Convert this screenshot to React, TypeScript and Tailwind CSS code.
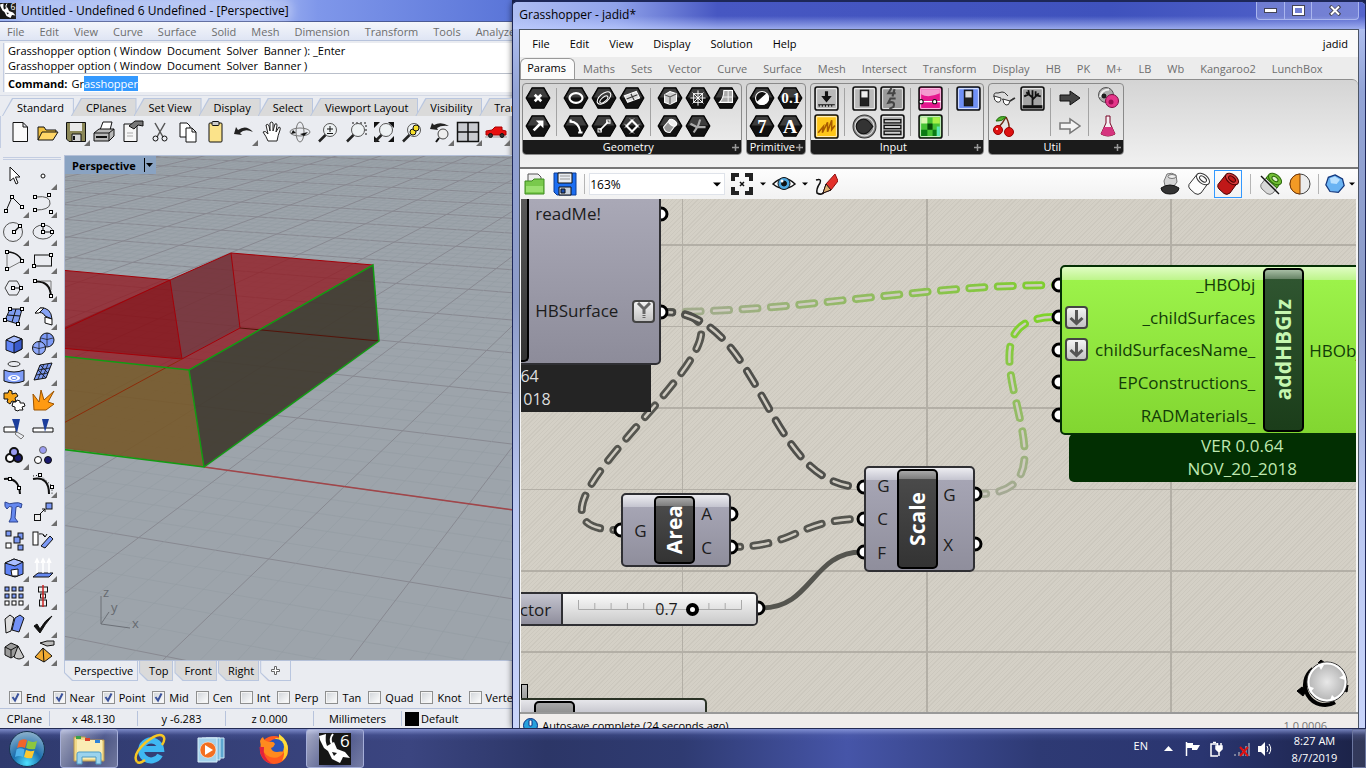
import { useEffect, useRef } from 'react';
import type { ReactNode } from 'react';

// Icon wrapper, all drawings use a 24 unit box
const Ico = ({ size = 24, children }: { size?: number; children: ReactNode }) => (
  <svg width={size} height={size} viewBox="0 0 24 24" fill="none" stroke="#111" strokeWidth="1" className="shrink-0">
    {children}
  </svg>
);

const Dots = ({ pts }: { pts: number[][] }) => (
  <g fill="#fff" stroke="#000">
    {pts.map(([x, y]) => (
      <rect key={`${x}-${y}`} x={x - 1.5} y={y - 1.5} width="3" height="3" />
    ))}
  </g>
);

const Flyout = () => (
  <svg width="6" height="6" viewBox="0 0 6 6" className="absolute right-0 bottom-0">
    <path d="M6 0V6H0Z" fill="#6d6d6d" />
  </svg>
);

const Rhino6 = ({ size }: { size: number }) => (
  <svg width={size} height={size} viewBox="0 0 32 32" className="shrink-0">
    <rect width="32" height="32" fill="#161616" />
    <path d="M0 3L7 1Q6 8 8 13L15 9L18 16L26 19L31 25L24 24L21 30L13 26L9 18L5 15L1 7Z" fill="#fff" />
    <path d="M14 1Q10 6 13 11" stroke="#fff" strokeWidth="2" fill="none" />
    <path d="M13 19l5 1-3 3z" fill="#161616" />
    <text x="21" y="14" fontSize="17" fill="#fff" className="font-['Open_Sans',sans-serif]">6</text>
  </svg>
);

const magnifier = (
  <g>
    <circle cx="14" cy="10" r="6.5" fill="#eef2f4" stroke="#555" />
    <path d="M9.5 15L3 21.5" stroke="#222" strokeWidth="2.5" />
  </g>
);

// Standard toolbar
const standardTools: { name: string; fly?: boolean; icon: ReactNode }[] = [
  { name: 'New', icon: <path d="M5 2.5H15L19.5 7V21.5H5Z M15 2.5V7H19.5" fill="#fafafa" /> },
  { name: 'Open', icon: <g><path d="M2 20V7h6l2 3h10v4" fill="#f0c040" /><path d="M2 20L6 12H22L17 20Z" fill="#ffd667" /></g> },
  { name: 'Save', fly: true, icon: <g><path d="M2.5 2.5H21.5V21.5H5L2.5 19Z" fill="#8b8757" /><path d="M6 3H18V11H6Z" fill="#e9e9e9" stroke="none" /><path d="M8 14H17V21.5H8Z" fill="#d7d7d7" /><path d="M10 16v4" strokeWidth="2" /></g> },
  { name: 'Print', icon: <g><path d="M8 10L11 2H20L18 10" fill="#fff" /><path d="M2 13L7 9H22V16L17 21H2Z" fill="#b9b9b9" /><path d="M2 13H17V21M17 13L22 9" /><path d="M4 17H15" strokeWidth="2" /></g> },
  { name: 'Properties', icon: <g><path d="M4 4H17V21.5H4Z" fill="#f6f6f6" /><path d="M9 6L15 1H23V6L18 5L14 9Z" fill="#777" /><path d="M7 13H13M7 16H13" stroke="#aaa" /></g> },
  { name: 'Cut', icon: <g><path d="M7 3L15 17M17 3L9 17" stroke="#555" strokeWidth="1.5" /><circle cx="7.5" cy="18.5" r="2.5" /><circle cx="16.5" cy="18.5" r="2.5" /></g> },
  { name: 'Copy', icon: <g><path d="M4 3H11L14 6V17H4Z" fill="#fff" /><path d="M10 8H16L20 12V22H10Z" fill="#fff" /><path d="M16 8V12H20" /></g> },
  { name: 'Paste', icon: <g><rect x="5" y="3" width="13" height="19" rx="1" fill="#fbe38a" /><rect x="8" y="1.5" width="7" height="4" rx="1" fill="#ccc" /></g> },
  { name: 'Undo', fly: true, icon: <path d="M2 14L4 7L6 10Q14 4 21 12Q13 8 8 13L10 15Z" fill="#222" stroke="none" /> },
  { name: 'Pan', icon: <path d="M8 21Q6 16 3 12Q5 10 8 14L6 5Q8 3 9 6L10 11V3Q12 1 13 3V11L15 4Q17 3 17 5L16 12L19 7Q21 7 20 10Q18 15 17 21Z" fill="#fff" stroke="#222" /> },
  { name: 'Rotate view', icon: <g stroke="#777"><ellipse cx="12" cy="12" rx="10" ry="4" /><ellipse cx="12" cy="12" rx="4" ry="10" /><path d="M5 10L3 14L8 13ZM12 14L20 12L16 16Z" fill="#111" stroke="none" /></g> },
  { name: 'Zoom', icon: <g>{magnifier}<path d="M11 9H17M14 6V12M11 13.5H17" stroke="#111" /></g> },
  { name: 'Zoom window', icon: <g><path d="M8 3H22V17" strokeDasharray="2 2" />{magnifier}</g> },
  { name: 'Zoom extents', icon: <g><path d="M2 2H8L2 8ZM22 2H16L22 8ZM2 22H8L2 16ZM22 22H16L22 16Z" fill="#111" stroke="none" />{magnifier}</g> },
  { name: 'Zoom selected', icon: <g>{magnifier}<circle cx="13" cy="12" r="3" fill="#f6df2a" /><circle cx="16" cy="8" r="3" fill="#f6df2a" /></g> },
  { name: 'Undo view', fly: true, icon: <g><path d="M2 9L4 3L6 5Q13 1 21 6Q13 5 9 8L10 10Z" fill="#222" stroke="none" /><circle cx="15" cy="14" r="5" fill="#eee" stroke="#444" /><path d="M11 18L8 22" strokeWidth="2" /></g> },
  { name: 'Viewports', fly: true, icon: <g><rect x="1.5" y="2.5" width="21" height="19" fill="#c9cbd0" strokeWidth="1.5" /><path d="M12 2V22M1 12H23" strokeWidth="1.5" /></g> },
  { name: 'Car', fly: true, icon: <g><path d="M1 17H23" stroke="#999" /><path d="M2 15V11L8 10L11 7H18V10L22 11V15Z" fill="#e81010" stroke="#a00" /><circle cx="6.5" cy="15.5" r="2" fill="#333" /><circle cx="18" cy="15.5" r="2" fill="#333" /></g> },
];

// Side toolbar, two per row
const sideTools: { name: string; fly?: boolean; icon: ReactNode }[] = [
  { name: 'Select', icon: <path d="M8 3V17L11.5 14L14 20L16 19L13.5 13H18Z" fill="#fff" /> },
  { name: 'Point', fly: true, icon: <circle cx="12" cy="12" r="2" fill="#fff" /> },
  { name: 'Polyline', fly: true, icon: <g><path d="M4 19L10 5L20 15" /><Dots pts={[[4, 19], [10, 5], [20, 15]]} /></g> },
  { name: 'Curve', fly: true, icon: <g><path d="M5 5Q20 3 19 12Q18 18 5 18" stroke="#555" /><Dots pts={[[4, 5], [18, 3], [4, 18], [20, 20]]} /></g> },
  { name: 'Circle', fly: true, icon: <g><circle cx="11" cy="12" r="9.5" stroke="#555" /><path d="M12 12L18 6" strokeWidth="1.5" /><Dots pts={[[12, 12], [18, 6]]} /></g> },
  { name: 'Ellipse', fly: true, icon: <g><ellipse cx="12" cy="12" rx="10" ry="7" stroke="#555" /><path d="M12 5V12H22" /><Dots pts={[[12, 5], [12, 12], [21, 12]]} /></g> },
  { name: 'Arc', fly: true, icon: <g><path d="M5 4Q16 4 20 13L5 21Z" stroke="#777" /><path d="M5 4Q16 4 20 13" strokeWidth="1.5" /><Dots pts={[[5, 4], [20, 13], [5, 21]]} /></g> },
  { name: 'Rectangle', fly: true, icon: <g><rect x="3.5" y="7" width="17" height="11" /><Dots pts={[[3, 18], [20, 7]]} /></g> },
  { name: 'Polygon', fly: true, icon: <g><path d="M3 12L7 5H15L19 12L15 19H7Z" stroke="#444" /><path d="M11 12H19" /><Dots pts={[[11, 12], [19, 12]]} /></g> },
  { name: 'Fillet', fly: true, icon: <g><path d="M5 5.5Q19 5 20 20" strokeWidth="2" /><path d="M10 5H20V14" stroke="#777" /><Dots pts={[[4, 5], [20, 20]]} /></g> },
  { name: 'Surface', fly: true, icon: <g><path d="M8 5H20L16 20L3 16Z" fill="#7e9cf0" /><path d="M14 5L10 18M5.5 11L18 12" /><Dots pts={[[8, 5], [20, 5], [3, 16], [16, 20]]} /></g> },
  { name: 'Loft', fly: true, icon: <g><path d="M4 9L9 4Q20 3 21 15L14 12Q12 7 4 9Z" fill="#87a3f5" /><path d="M4 9L9 4H13L8 9ZM14 13L21 15V21L14 19Z" fill="#fff" /></g> },
  { name: 'Box', fly: true, icon: <g><path d="M4 8L12 4L20 7V17L12 21L4 18Z" fill="#5f83f5" /><path d="M4 8L12 4L20 7L12 11Z" fill="#a9beff" /><path d="M12 11L20 7V17L12 21Z" fill="#3a5bcb" /></g> },
  { name: 'Sphere', fly: true, icon: <g><circle cx="16" cy="8" r="7" fill="#7d9af5" /><circle cx="8" cy="16" r="6.5" fill="#8ea8fa" /><path d="M10 6Q16 9 22 6M16 1V14M2 15Q8 18 14 15M8 10V22" strokeWidth=".7" /></g> },
  { name: 'Revolve', fly: true, icon: <g><ellipse cx="12" cy="4" rx="6" ry="2.5" stroke="#333" /><path d="M2 10Q12 14 22 10V21Q12 25 2 21Z" fill="#7f9df8" /><ellipse cx="12" cy="18" rx="6" ry="3" fill="#fff" stroke="none" /><ellipse cx="12" cy="18" rx="3" ry="1.5" stroke="#6488f1" /></g> },
  { name: 'Mesh', fly: true, icon: <g><path d="M9 5L21 3L15 18L3 20Z" fill="#7c99f0" /><path d="M13 4L7 19M17 4L11 19M7 10L19 8M5 15L17 13M9 5L17 13M7 10L15 18" strokeWidth=".8" /></g> },
  { name: 'Explode', icon: <g><path d="M2 5h4l1-3 3 1v3l4-1 2 3-3 2 1 4-4-1-2 3-3-2 1-3-4 0z" fill="#f5a316" /><path d="M11 14h3l1-2 3 1v2l4 0 1 3-3 1 1 3-4 0-1 1-3-1 0-3-3-1z" fill="#fff" /></g> },
  { name: 'Burst', icon: <path d="M3 22L2 6L8 14L10 2L13 12L23 3L17 14L23 16L15 22Z" fill="#ff9a12" stroke="#9a5200" /> },
  { name: 'Trim', icon: <g><path d="M2 11H14V16H2Z" fill="#fff" /><path d="M10 3H18L15 17Z" fill="#1c3e9c" stroke="none" /><path d="M15 16L22 20L19 23L13 18Z" stroke="#777" /></g> },
  { name: 'Split', icon: <g><path d="M2 12H22V16H2Z" fill="#fff" /><path d="M11 3H18L14 16Z" fill="#1c3e9c" stroke="none" /></g> },
  { name: 'Group', fly: true, icon: <g strokeWidth="2"><circle cx="8" cy="14" r="4" fill="#fff" /><circle cx="16" cy="14" r="4" fill="#1a1a70" /><circle cx="12" cy="8" r="4" fill="#9a9cf2" /></g> },
  { name: 'Ungroup', icon: <g><circle cx="12" cy="6" r="3.5" fill="#9a9cf2" stroke="#666" /><circle cx="7" cy="16" r="3.5" fill="#fff" /><circle cx="17" cy="16" r="3.5" fill="#1a1a70" /></g> },
  { name: 'Edit points', icon: <g><path d="M2 7Q17 5 18 22" strokeWidth="2" /><Dots pts={[[8, 7], [17, 16]]} /></g> },
  { name: 'Control points', fly: true, icon: <g><path d="M2 7Q18 4 18 22" strokeWidth="2" /><path d="M2 4L9 3L21 14V22" strokeDasharray="1 2" /><Dots pts={[[9, 3], [21, 15]]} /></g> },
  { name: 'Text', icon: <path d="M3 2Q8 5 12 3Q17 2 20 4L19 8Q16 5 14 7L13 18L16 22H7L9 18L10 7Q7 5 5 9Q2 7 3 2Z" fill="#6488f0" stroke="#2c438f" /> },
  { name: 'Move', fly: true, icon: <g><rect x="3.5" y="14.5" width="6" height="6" fill="#eee" /><rect x="15" y="3" width="6" height="6" fill="#7b99f5" /><path d="M9 14L14 9M11 9H14V12" /></g> },
  { name: 'Copy objects', icon: <g><g fill="#7b99f5"><rect x="4" y="3" width="5" height="5" /><rect x="16" y="5" width="5" height="6" /><rect x="12" y="9" width="6" height="6" /><rect x="16" y="17" width="5" height="5" /></g><rect x="4" y="15" width="5" height="5" fill="#fff" /></g> },
  { name: 'Rotate', icon: <g><rect x="2" y="4" width="5" height="13" fill="#fff" /><path d="M10 18L19 8L22 11L14 20Z" fill="#7b99f5" /><path d="M8 6Q13 5 14 9M12 7L14 9L16 6" /></g> },
  { name: 'Cage', fly: true, icon: <g><path d="M3 7L12 3L21 6V18L13 21L3 18Z" fill="#5f83f5" /><path d="M3 7L12 3L21 6L13 10Z" fill="#a9beff" /><path d="M9 14L16 13V20L10 20Z" fill="#fff" /></g> },
  { name: 'Project', fly: true, icon: <g><path d="M2 21H18L22 17H7Z" fill="#6488f0" /><path d="M6 17V4M12 17V4M18 17V4M4 7L6 3L8 7M10 7L12 3L14 7M16 7L18 3L20 7" stroke="#fff" strokeWidth="1.5" /></g> },
  { name: 'Array', fly: true, icon: <g>{[3, 10, 17].map((x) => [3, 10, 17].map((y) => <rect key={`${x}${y}`} x={x} y={y} width="4" height="4" fill={y === 17 ? '#fff' : '#7b99f5'} />))}</g> },
  { name: 'Align', fly: true, icon: <g><rect x="7.5" y="3" width="9" height="5" fill="#eee" /><rect x="9.5" y="10" width="5" height="4" fill="#eee" /><rect x="8.5" y="16" width="7" height="6" fill="#eee" /><path d="M12 1V23" stroke="#c22" strokeWidth="1.5" /></g> },
  { name: 'Bend', fly: true, icon: <g><path d="M3 7L8 3L12 6L9 19L4 21Z" fill="#ddd" /><path d="M13 6L18 3L22 6L17 20L10 18Z" fill="#7391f5" /></g> },
  { name: 'Check', fly: true, icon: <path d="M3 14L6 12L9 17Q14 8 21 4Q14 12 9 21Z" fill="#111" /> },
  { name: 'Solid', fly: true, icon: <g><path d="M3 7L9 3L16 6V14L9 18L3 15Z" fill="#9a9a9a" /><path d="M3 7L9 10L16 6M9 10V18" /><path d="M16 6L22 17Q17 21 12 17Z" fill="#c6c6c6" /></g> },
  { name: 'Pyramid', fly: true, icon: <g><path d="M12 8L21 16L13 22L4 17Z" fill="#f2ab32" /><path d="M12 8L13 22" /><path d="M9 3L16 1H23V5L16 6Z" fill="#bbb" /></g> },
];

const SlantTab = ({ label, active }: { label: string; active?: boolean }) => (
  <button className="-mr-[3px] h-[18px] bg-[#b9c6df] p-px pb-0 [clip-path:polygon(10px_0,100%_0,100%_100%,0_100%)]">
    <span className={`flex h-full items-center pr-[9px] pl-[14px] whitespace-nowrap [clip-path:polygon(10px_0,100%_0,100%_100%,0_100%)] ${active ? 'bg-[#eaecf1]' : 'bg-[#dadada]'}`}>
      {label}
    </span>
  </button>
);

const ViewTab = ({ label, active }: { label: ReactNode; active?: boolean }) => (
  <button className="h-[20px] bg-[#b9c6df] p-px pt-0 [clip-path:polygon(0_0,100%_0,100%_100%,8px_100%,0_60%)]">
    <span className={`flex h-full items-center pr-1 pl-[9px] [clip-path:polygon(0_0,100%_0,100%_100%,8px_100%,0_60%)] ${active ? 'bg-[#eaecf1]' : 'bg-[#dadada]'}`}>
      {label}
    </span>
  </button>
);

// Perspective ground grid: two families of lines meeting on the horizon
const GroundGrid = () => {
  const lines: ReactNode[] = [];
  for (let k = -10; k <= 75; k++) {
    const y = 1 / (0.001961 + k * 0.0000582);
    const major = k % 5 === 0;
    const slope = y / 3652;
    lines.push(<line key={`a${k}`} x1="0" y1={y - 512 * slope} x2="760" y2={y + 248 * slope} stroke={major ? '#888991' : '#949ca3'} strokeWidth={major ? 1 : 0.6} />);
  }
  for (let j = -80; j <= 14; j++) {
    const x = 163 + j * 37.4;
    const major = j % 5 === 0;
    lines.push(<line key={`b${j}`} x1={x} y1="660" x2={x + (853 - x) * 0.8} y2="132" stroke={major ? '#888991' : '#949ca3'} strokeWidth={major ? 1 : 0.6} />);
  }
  return <g>{lines}</g>;
};

const Viewport = () => (
  <div className="relative min-h-0 flex-1 overflow-hidden border-t border-l border-[#b4c0d8] bg-[#9da4ab]">
    <svg className="block h-full w-full">
      <g transform="translate(-65 -156)">
        <GroundGrid />
        <path d="M204 467L700 536" stroke="#a14549" strokeWidth="1.5" />
        <path d="M60 270L170 280L231 253L373 265L189 370L60 356Z" fill="#92141c" fillOpacity=".75" />
        <path d="M60 329L170 280L182 359L60 348Z" fill="#7d0a10" fillOpacity=".5" />
        <path d="M170 280L231 253L240 327L182 359Z" fill="#5a4148" fillOpacity=".45" />
        <path d="M60 356L189 370L204 467L60 448Z" fill="#755627" fillOpacity=".88" />
        <path d="M189 370L373 265L379 341L204 467Z" fill="#40392f" fillOpacity=".92" />
        <path d="M60 270L170 280L231 253L373 265M60 331L170 280L182 359L60 348M231 253L240 328L182 359" stroke="#a40008" fill="none" />
        <path d="M240 328L379 341" stroke="#541309" />
        <path d="M182 359L60 425" stroke="#8c2c0a" />
        <path d="M60 356L189 370L373 265L379 341L204 467L60 449M189 370L204 467" stroke="#129b12" strokeWidth="1.5" fill="none" />
        <path d="M101 596V624L130 628M101 624L109 612" stroke="#6c7077" fill="none" />
        <g fontSize="13" fill="#666a70" className="font-['Open_Sans',sans-serif]">
          <text x="103" y="597">z</text>
          <text x="111" y="612">y</text>
          <text x="132" y="628">x</text>
        </g>
      </g>
    </svg>
    <button className="absolute top-0 left-0 flex h-[18px] items-center bg-[#8aa3c2] pl-[7px] font-bold text-black">
      Perspective
      <span className="ml-2 h-3.5 w-px bg-black" />
      <svg width="9" height="6" viewBox="0 0 9 6" className="mr-0.5"><path d="M1 1h7L4.5 5z" /></svg>
    </button>
  </div>
);

const osnaps = [
  ['End', true], ['Near', true], ['Point', true], ['Mid', true], ['Cen', false], ['Int', false],
  ['Perp', false], ['Tan', false], ['Quad', false], ['Knot', false], ['Vertex', false],
] as const;

const RhinoWindow = () => {
  const command = useRef<HTMLInputElement>(null);

  // Autocompleted part of the command stays selected
  useEffect(() => {
    command.current?.focus();
    command.current?.setSelectionRange(2, 11);
  }, []);

  return (
    <section className="flex w-3/8 min-w-0 shrink-0 flex-col overflow-hidden bg-[#eaecf1]">
      <header className="flex h-[22px] shrink-0 items-center gap-[5px] border-b border-[#4b5a94] bg-[linear-gradient(90deg,#9db3f0_0%,#a9bbf3_50%,#7f97ea_62%,#5a75d8_100%)]">
        <Rhino6 size={16} />
        <h1 className="rounded bg-white/20 text-[12px] whitespace-nowrap shadow-[0_0_8px_4px_rgba(255,255,255,0.25)]">Untitled - Undefined 6 Undefined - [Perspective]</h1>
      </header>
      <nav className="flex h-[19px] shrink-0 items-center gap-[15px] border-b border-[#b7c3dc] bg-[linear-gradient(#f4f6fb,#dfe5f4)] pl-[7px] text-[#6d6d6d]">
        {['File', 'Edit', 'View', 'Curve', 'Surface', 'Solid', 'Mesh', 'Dimension', 'Transform', 'Tools', 'Analyze'].map((m) => (
          <button key={m}>{m}</button>
        ))}
      </nav>
      <div className="mt-0.5 ml-[3px] shrink-0 border-l border-[#c3cde2] pl-px">
        <div className="h-[30px] bg-white pl-[3px] leading-[15px]">
          <p className="whitespace-pre">Grasshopper option ( Window  Document  Solver  Banner ): _Enter</p>
          <p className="whitespace-pre">Grasshopper option ( Window  Document  Solver  Banner )</p>
        </div>
        <div className="flex h-[19px] items-center border-t border-[#b9bfca] bg-white pl-[3px]">
          <label htmlFor="command" className="font-bold">Command:</label>
          <input id="command" ref={command} defaultValue="Grasshopper" className="ml-1 min-w-0 flex-1 outline-none selection:bg-[#3399ff] selection:text-white" />
        </div>
      </div>
      <div className="mt-[3px] flex h-[21px] shrink-0 items-end border-t border-[#d4d9e5] pl-[2px]">
        {['Standard', 'CPlanes', 'Set View', 'Display', 'Select', 'Viewport Layout', 'Visibility', 'Transform'].map((t, i) => (
          <SlantTab key={t} label={t} active={i === 0} />
        ))}
      </div>
      <div className="flex h-[32px] shrink-0 items-center border-l border-[#c3cde2] pl-[5px]">
        {standardTools.map((t) => (
          <button key={t.name} aria-label={t.name} className="relative flex h-[28px] w-[28px] shrink-0 items-center justify-center">
            <Ico size={24}>{t.icon}</Ico>
            {t.fly && <Flyout />}
          </button>
        ))}
      </div>
      <div className="flex min-h-0 flex-1 pt-[7px]">
        <div className="flex w-[64px] shrink-0 flex-col">
          <div className="mx-[3px] my-[2px] h-[3px] border-y border-[#c3cde2]" />
          <div className="grid w-[57px] grid-cols-2">
            {sideTools.map((t) => (
              <button key={t.name} aria-label={t.name} className="relative flex h-[28px] items-center justify-center">
                <Ico size={24}>{t.icon}</Ico>
                {t.fly && <Flyout />}
              </button>
            ))}
          </div>
        </div>
        <div className="flex min-w-0 flex-1 flex-col">
          <Viewport />
          <div className="flex h-[27px] shrink-0 items-start gap-px border-t border-[#b4c0d8]">
            <ViewTab label="Perspective" active />
            <ViewTab label="Top" />
            <ViewTab label="Front" />
            <ViewTab label="Right" />
            <ViewTab
              active
              label={<svg width="12" height="12" viewBox="0 0 12 12" fill="#fff" stroke="#666" className="mr-1"><path d="M4.5 1.5h2v3h3v2h-3v3h-2v-3h-3v-2h3z" /></svg>}
            />
          </div>
        </div>
      </div>
      <div className="flex h-[22px] shrink-0 items-center gap-[7px] overflow-hidden border-b border-[#b7c3dc] pl-[9px]">
        {osnaps.map(([name, on]) => (
          <label key={name} className="flex shrink-0 items-center gap-[4px]">
            <span className="relative h-[13px] w-[13px] shrink-0">
              <input
                type="checkbox"
                defaultChecked={on}
                className="peer block h-full w-full appearance-none border border-[#8e8f8f] bg-[linear-gradient(135deg,#cfd3d8,#fff)] shadow-[inset_0_0_0_1px_#f4f4f4]"
              />
              <svg viewBox="0 0 13 13" fill="none" stroke="#3a529c" strokeWidth="2" className="pointer-events-none absolute inset-0 hidden peer-checked:block">
                <path d="M3.5 6L6 9.5L9.5 2.5" />
              </svg>
            </span>
            {name}
          </label>
        ))}
      </div>
      <footer className="flex h-[19px] shrink-0 items-center text-center">
        <span className="w-[50px] border-r border-[#b7c3dc]">CPlane</span>
        <span className="w-[88px] border-r border-[#b7c3dc]">x 48.130</span>
        <span className="w-[88px] border-r border-[#b7c3dc]">y -6.283</span>
        <span className="w-[88px] border-r border-[#b7c3dc]">z 0.000</span>
        <span className="w-[88px] border-r border-[#b7c3dc]">Millimeters</span>
        <span className="ml-[3px] h-3.5 w-3.5 bg-black" />
        <span className="ml-0.5">Default</span>
      </footer>
    </section>
  );
};

// Black hexagon used by the Grasshopper params
const Hex = ({ children }: { children: ReactNode }) => (
  <Ico size={26}>
    <path d="M1 12L6.5 2.5H17.5L23 12L17.5 21.5H6.5Z" fill="#111" stroke="#000" />
    <path d="M2.5 11.5L7 3.5H17L21.5 11.5Z" fill="#3d3d3d" stroke="none" />
    <g stroke="#fff">{children}</g>
  </Ico>
);

const Tile = ({ children, fill = '#b9b9b9' }: { children: ReactNode; fill?: string }) => (
  <Ico size={25}>
    <rect x="1" y="1" width="22" height="22" rx="2" fill={fill} stroke="#111" strokeWidth="1.5" />
    <rect x="2.5" y="2.5" width="19" height="19" rx="1" stroke="#fff" strokeOpacity=".7" />
    {children}
  </Ico>
);

const glyph = "font-['Liberation_Serif',serif] font-bold";

type Column = [ReactNode, ReactNode?];

const geometry: Column[][] = [
  [[<Hex><path d="M9 9L15 15M15 9L9 15" strokeWidth="2.5" /></Hex>, <Hex><path d="M8 16L14 10" strokeWidth="2.5" /><path d="M10 7H17V14Z" fill="#fff" stroke="none" /></Hex>]],
  [
    [<Hex><ellipse cx="12" cy="12" rx="6" ry="4.5" strokeWidth="2" /></Hex>, <Hex><path d="M7 8Q14 8 16 17M7 6V9M14 18H18" strokeWidth="2" /></Hex>],
    [<Hex><ellipse cx="12" cy="12" rx="7.5" ry="4" transform="rotate(-40 12 12)" /><ellipse cx="11" cy="13" rx="4.5" ry="2" transform="rotate(-40 12 12)" /></Hex>, <Hex><path d="M8 16L16 8" strokeWidth="1.5" /><path d="M6.5 14.5h3v3h-3zM14.5 6.5h3v3h-3z" /></Hex>],
    [<Hex><path d="M5 10L16 6L19 12L8 16Z" fill="#ddd" /><path d="M11 8L14 14M7 13L17 9" stroke="#333" /></Hex>, <Hex><path d="M7 12L12 7L17 12L12 17Z" strokeWidth="2" /><path d="M5 10L14 19M10 5L19 14M10 19L19 10M5 14L14 5" strokeWidth=".6" /></Hex>],
  ],
  [
    [<Hex><path d="M7 9L12 6L18 8V15L12 18L7 16Z" fill="#ccc" /><path d="M7 9L12 11L18 8M12 11V18" stroke="#555" /></Hex>, <Hex><path d="M6 13L12 6L18 10L12 18Q7 18 6 13Z" fill="#999" /><ellipse cx="14.5" cy="9" rx="4" ry="2.5" transform="rotate(35 14.5 9)" fill="#eee" /></Hex>],
    [<Hex><path d="M12 5V19M5 12H19M7 7L17 17M17 7L7 17M8 8H16V16H8Z" strokeWidth=".9" /></Hex>, <Hex><path d="M5 10L11 13H19M14 6L12 12L8 18" strokeWidth="2" stroke="#aaa" /></Hex>],
    [<Hex><path d="M6 16Q10 12 10 5H18V16Z" fill="#aaa" /><path d="M14 5V16M9 11H18" stroke="#eee" /></Hex>],
  ],
];

const primitive: Column[][] = [
  [
    [<Hex><circle cx="12" cy="12" r="6" fill="#111" /><path d="M7.5 16A6 6 0 0 0 16.5 8Z" fill="#fff" /></Hex>, <Hex><text x="7.5" y="18" fontSize="17" fill="#fff" stroke="none" className={glyph}>7</text></Hex>],
    [<Hex><text x="4" y="17" fontSize="14" fill="#fff" stroke="none" className={glyph}>0.1</text></Hex>, <Hex><text x="5.5" y="18" fontSize="18" fill="#fff" stroke="none" className={glyph}>A</text></Hex>],
  ],
];

const input: Column[][] = [
  [[<Tile><path d="M12 5V11" strokeWidth="3" /><path d="M8 10H16L12 15Z" fill="#111" /><path d="M4 18H20M5 20V18M8 20V18M11 20V18M14 20V18M17 20V18" /></Tile>, <Tile fill="#fec619"><path d="M4 18L9 12L8 18L13 8L13 17L17 6L17 15L20 11" stroke="#a85b00" strokeWidth="1.5" /></Tile>]],
  [
    [<Tile><rect x="8" y="4" width="8" height="15" fill="#222" /><rect x="9" y="5" width="6" height="6" fill="#eee" stroke="none" /></Tile>, <Ico size={25}><circle cx="12" cy="12" r="11" fill="#8a8a8a" stroke="#333" /><circle cx="12" cy="12" r="9" stroke="#ddd" /><path d="M20 12L16 17A7 7 0 1 1 16 7Z" fill="#333" /></Ico>],
    [<Tile fill="#9a9a9a"><path d="M11 2L8 7H15M14 3L12 10M15 12H10L8 16Q15 14 13 20L9 22" stroke="#444" strokeWidth="2" /></Tile>, <Tile fill="#aaa"><path d="M4 5.5H20V8.5H4ZM4 11H20V14H4ZM4 16.5H20V19.5H4Z" fill="#ccc" strokeWidth="1.2" /></Tile>],
  ],
  [[<Tile fill="#e6178f"><path d="M3 3H21V7Q10 12 3 8Z" fill="#f49ad0" stroke="none" /><path d="M2 15H22" stroke="#fff" /><circle cx="3" cy="15" r="2" fill="#fff" /><circle cx="16" cy="15" r="2" fill="#fff" /></Tile>, <Tile fill="#46c234"><g stroke="none"><path d="M3 3h6v6H3z" fill="#d9f7b0" /><path d="M9 9h5v6H9z" fill="#094d08" /><path d="M14 3h7v6h-7z" fill="#a9f048" /><path d="M3 15h6v6H3zM14 15h4v6h-4z" fill="#0b7a14" /><path d="M18 12h3v9h-3z" fill="#5be6b4" /></g></Tile>]],
  [[<Tile fill="#6f90f6"><rect x="8" y="4" width="8" height="15" fill="#222" /><rect x="9" y="5" width="6" height="6" fill="#ddd" stroke="none" /></Tile>]],
];

const util: Column[][] = [
  [
    [<Ico><path d="M2 11Q1 6 6 7L10 6M22 12L18 15M10 13L12 14M14 8L16 10M10 6Q13 6 14 8" stroke="#333" /><path d="M2 10L9 12Q9 17 5 16Q2 15 2 10ZM11 13L18 15Q17 20 14 19Q11 18 11 13Z" fill="#fff" stroke="#333" /><path d="M18 15L23 12" stroke="#333" strokeWidth="1.5" /></Ico>, <Ico><path d="M14 3Q11 9 6 14M14 3Q18 10 17 17" stroke="#6d2a12" strokeWidth="1.5" /><path d="M4 7Q7 1 14 3Q10 8 4 7Z" fill="#4fb42b" stroke="#246b10" /><circle cx="6" cy="16" r="4.5" fill="#dd1111" stroke="#900" /><circle cx="17" cy="18" r="4.5" fill="#dd1111" stroke="#900" /><circle cx="5" cy="15" r="1" fill="#fff" stroke="none" /></Ico>],
    [<Tile fill="#a4a4a4"><path d="M3 19H21V21H3Z" fill="#111" /><path d="M12 19V11L6 6M12 13L18 7M12 11V4M8 8L4 10M16 9L20 10M9 9L8 4M15 10L15 5" strokeWidth="1.7" /></Tile>],
  ],
  [[<Ico><path d="M2 9H12V5L22 12L12 19V15H2Z" fill="#444" stroke="#111" /></Ico>, <Ico><path d="M2 9H12V5L22 12L12 19V15H2Z" fill="#f4f4f4" stroke="#777" strokeWidth="1.5" /></Ico>]],
  [[<Ico><circle cx="10" cy="9" r="7.5" fill="#ababab" stroke="#555" /><path d="M4 11Q5 4 13 3.5" stroke="#eee" strokeWidth="2" /><circle cx="8" cy="10" r="2" fill="#222" /><circle cx="16" cy="15" r="6.5" fill="#e5358a" stroke="#7a0d42" /><circle cx="15" cy="16" r="2.5" fill="#9b0d52" stroke="none" /></Ico>, <Ico><path d="M10 2H14V9L19 20Q12 24 5 20L10 9Z" fill="#f5eef2" stroke="#702" /><path d="M8 13H16L19 20Q12 24 5 20Z" fill="#d6347e" stroke="none" /></Ico>]],
];

const RibbonGroup = ({ title, blocks }: { title: string; blocks: Column[][] }) => (
  <div className="flex shrink-0 flex-col overflow-hidden rounded-[4px] border border-[#8a8a8a] bg-[linear-gradient(#d6d6d6,#efefef)]">
    <div className="flex gap-[10px] px-px">
      {blocks.map((columns, b) => (
        <div key={b} className="relative flex">
          {b > 0 && <span className="absolute top-1 bottom-1 left-[-6px] w-px bg-[#a3a3a3]" />}
          {columns.map((column, c) => (
            <div key={c}>
              {column.map((icon, r) => (
                <button key={r} aria-label={`${title} ${b + 1}.${c + 1}.${r + 1}`} className="flex h-[28px] w-[28px] items-center justify-center">
                  {icon}
                </button>
              ))}
            </div>
          ))}
        </div>
      ))}
    </div>
    <div className="mt-auto flex h-[14px] items-center bg-[#1b1b1b] pr-[2px] pl-px leading-[14px] text-white">
      <span className="flex-1 text-center">{title}</span>
      <svg width="7" height="7" viewBox="0 0 7 7"><path d="M3.5 0V7M0 3.5H7" stroke="#999" strokeWidth="1.5" /></svg>
    </div>
  </div>
);

const Caret = () => (
  <svg width="6" height="4" viewBox="0 0 6 4" className="shrink-0"><path d="M0 .5H6L3 3.5Z" /></svg>
);

// Tilted cylinder, open end to the upper right
const Can = ({ fill, top, dark }: { fill: string; top: string; dark: string }) => (
  <Ico>
    <path d="M9.5 3L2 12.5Q1 15 3 17L8 21.5Q11 23.5 14 21L22 10Z" fill={fill} stroke={dark} />
    <ellipse cx="16" cy="7" rx="7.5" ry="4.5" transform="rotate(38 16 7)" fill={top} stroke={dark} />
    <ellipse cx="16" cy="7" rx="4" ry="2.2" transform="rotate(38 16 7)" fill={fill} stroke={dark} />
  </Ico>
);

const CanvasToolbar = () => (
  <div className="flex h-[32px] shrink-0 items-center border-t-2 border-[#777] bg-[linear-gradient(#fdfdfd,#f2f2f2)] px-[3px]">
    <button aria-label="Open document" className="w-[30px]"><Ico><path d="M5 10V2H15L18 5V10" fill="#eee" stroke="#555" /><path d="M2 9H9L11 7H21V22H2Z" fill="#79c94c" stroke="#3d8a1d" /><path d="M3 20H20V14H3Z" fill="#9be070" stroke="none" /></Ico></button>
    <button aria-label="Save document" className="w-[31px]"><Ico><path d="M1 1H23V23H4L1 20Z" fill="#1c6ef2" stroke="#0c3c96" /><path d="M5 1H19V11H5Z" fill="#e8ecf2" /><path d="M7 4H17M7 7H17" stroke="#999" /><path d="M6 15H18V23H6Z" fill="#c9d2de" /><path d="M8 17H12V21H8Z" fill="#1c4fb0" /></Ico></button>
    <span className="mr-[4px] h-[20px] w-px bg-[#b5b5b5]" />
    <div className="relative h-[22px] w-[136px]">
      <select aria-label="Zoom level" defaultValue="163%" className="h-full w-full appearance-none border border-[#dfe3ea] bg-white text-[12px]">
        <option>163%</option>
        <option>100%</option>
      </select>
      <svg width="8" height="5" viewBox="0 0 8 5" className="pointer-events-none absolute top-[9px] right-[4px]"><path d="M0 .5H8L4 4.5Z" /></svg>
    </div>
    <button aria-label="Zoom extents" className="ml-[5px] flex items-center gap-[6px]">
      <Ico><path d="M3 9V3H9M15 3H21V9M21 15V21H15M9 21H3V15" stroke="#222" strokeWidth="4" /><path d="M10 10L14 14M14 10L10 14" strokeWidth="1.5" /></Ico>
      <Caret />
    </button>
    <button aria-label="Preview" className="ml-[6px] flex items-center gap-[6px]">
      <Ico><path d="M1 12Q12 1 23 12Q12 21 1 12Z" fill="#fff" strokeWidth="1.5" /><circle cx="12" cy="11.5" r="6" fill="#4da7e0" /><circle cx="12" cy="11.5" r="2.5" fill="#111" /><circle cx="10" cy="9" r="1.5" fill="#fff" stroke="none" /></Ico>
      <Caret />
    </button>
    <button aria-label="Sketch" className="ml-[6px]"><Ico><path d="M2 8Q8 6 6 11Q2 17 3 21Q8 24 11 19" strokeWidth="1.5" /><path d="M9 21L12 12L21 2L24 9L17 18Z" fill="#e3302a" stroke="#8c1010" /><path d="M9 21L12 12L17 18Z" fill="#e2b071" /></Ico></button>
    <div className="ml-auto flex items-center">
      <button aria-label="No preview" className="w-[29px]"><Ico><path d="M6 9L9 2Q14 0 18 3L19 10L16 14H7Z" fill="#d5d5d5" stroke="#777" /><ellipse cx="14" cy="4.5" rx="4" ry="2" fill="#eee" stroke="#777" /><path d="M3 16Q12 10 21 16Q20 22 12 22Q4 22 3 16Z" fill="#333" /></Ico></button>
      <button aria-label="Wireframe preview" className="w-[27px]"><Can fill="#fdfdfd" top="#fff" dark="#333" /></button>
      <button aria-label="Shaded preview" className="flex h-[28px] w-[28px] items-center justify-center border border-[#3399ff]"><Can fill="#c01818" top="#d53a3a" dark="#4c0404" /></button>
      <span className="mx-[8px] h-[20px] w-px bg-[#b5b5b5]" />
      <button aria-label="Selected only" className="w-[29px]"><Ico><path d="M7 6L2 12.5Q1 15 3 17L8 21.5Q11 23.5 14 21L18 16Z" fill="#d9d9d9" stroke="#777" /><path d="M9.5 3L7 6L18 16L22 10Z" fill="#5fae26" stroke="#2e6a0c" /><ellipse cx="16" cy="7" rx="7.5" ry="4.5" transform="rotate(38 16 7)" fill="#72bf35" stroke="#2e6a0c" /><ellipse cx="16" cy="7" rx="3.5" ry="2" transform="rotate(38 16 7)" fill="#dff3cd" stroke="#2e6a0c" /><path d="M2 4L20 22" strokeWidth="1.5" /></Ico></button>
      <button aria-label="Document preview" className="w-[26px]"><Ico><circle cx="12" cy="12" r="10" fill="#ececec" stroke="#444" /><path d="M12 2A10 10 0 0 0 12 22Z" fill="#f39a25" stroke="#7c3b05" /></Ico></button>
      <span className="mr-[6px] ml-[4px] h-[20px] w-px bg-[#b5b5b5]" />
      <button aria-label="Mesh quality" className="flex items-center gap-[4px]">
        <Ico size={20}><path d="M12 1L21 6L23 14L16 22L6 21L1 13L4 4Z" fill="#69b3f3" stroke="#14377c" strokeWidth="1.5" /><path d="M12 3L18 7L14 12L7 11L6 5Z" fill="#b9e0ff" stroke="none" /></Ico>
        <Caret />
      </button>
    </div>
  </div>
);

const Wire = ({ d, color, offset = 0 }: { d: string; color: string; offset?: number }) => (
  <g fill="none" strokeLinecap="round" strokeDasharray="15 13.5" strokeDashoffset={offset}>
    <path d={d} stroke={color} strokeWidth="8" />
    <path d={d} stroke="#d0ccc2" strokeWidth="2.5" />
  </g>
);

const ports = [
  [661, 214], [661, 312],
  [1059, 285], [1059, 317], [1059, 350], [1059, 382], [1059, 415],
  [621, 530], [731, 514], [731, 547],
  [864, 487], [864, 519], [864, 552], [975, 494], [975, 544],
  [758, 608],
];

const Wires = () => (
  <svg className="absolute inset-0 h-full w-full">
    <defs>
      <linearGradient id="wireTop" gradientUnits="userSpaceOnUse" x1="664" y1="0" x2="1058" y2="0">
        <stop offset="0" stopColor="#a4ac90" /><stop offset=".15" stopColor="#a0ad88" /><stop offset="1" stopColor="#7ecf2c" />
      </linearGradient>
      <linearGradient id="wireChild" gradientUnits="userSpaceOnUse" x1="0" y1="494" x2="0" y2="317">
        <stop offset="0" stopColor="#a5a995" /><stop offset="1" stopColor="#7fd22b" />
      </linearGradient>
      <radialGradient id="ball"><stop offset="0" stopColor="#e8e8e8" /><stop offset="1" stopColor="#b2b2b2" /></radialGradient>
    </defs>
    <g transform="translate(-521 -199)">
      <path d="M682.5 199V720M521 326.5H1400M521 489.5H1400" stroke="#b3afa6" />
      <path d="M927 199V720M1171 199V720M521 245H1400M521 408H1400M521 571H1400M521 652H1400" stroke="#b3afa6" strokeWidth="2" />
      <Wire d="M664 312C800 312 920 285 1058 285" color="url(#wireTop)" offset={7} />
      <Wire d="M664 312C809 312 474 530 619 530" color="#55554f" offset={7} />
      <Wire d="M664 312C764 312 764 487 862 487" color="#4f4f4b" offset={7} />
      <Wire d="M732 547C797 547 797 519 862 519" color="#55554f" offset={7} />
      <Wire d="M978 494C1096 494 938 317 1056 317" color="url(#wireChild)" offset={7} />
      <path d="M762 608C812 608 812 552 862 552" stroke="#55554f" strokeWidth="5" fill="none" />
      {ports.map(([x, y]) => (
        <circle key={`${x}-${y}`} cx={x} cy={y} r="6" fill="#fff" stroke="#000" strokeWidth="3" />
      ))}
      <circle cx="1325" cy="685" r="20" fill="none" stroke="#000" strokeWidth="4" strokeDasharray="60 10 10 46" transform="rotate(60 1325 685)" />
      <path d="M1297 691L1302 687L1307 690L1303 696ZM1318 663L1321 660L1325 663ZM1343 690L1348 685L1347 692Z" fill="#000" stroke="#000" />
      <circle cx="1327" cy="682" r="20" fill="url(#ball)" stroke="#333" />
      <circle cx="1327" cy="682" r="18.5" fill="none" stroke="#fff" strokeWidth="2" />
      <path d="M1318 664L1324 665L1321 670ZM1339 678L1345 674V680ZM1308 686L1314 688L1310 693ZM1330 700L1332 695L1336 699Z" fill="#fff" />
    </g>
  </svg>
);

const nodeGrey = 'rounded-[5px] border-2 border-[#2f2f33] bg-[linear-gradient(#ededf1_0px,#c4c4cf_12px,#a6a5b4_12px,#8f8e9c_100%)]';

const NodeLabel = ({ children, className }: { children?: ReactNode; className: string }) => (
  <div className={`flex w-[41px] shrink-0 items-center justify-center rounded-[5px] border-2 border-black text-[21px] font-bold ${className}`}>
    <span className="rotate-180 leading-none [writing-mode:vertical-rl]">{children}</span>
  </div>
);

const blackLabel = 'bg-[linear-gradient(#a8a8a8_0px,#7c7c7c_8px,#4a4a4a_8px,#333_100%)] text-white';

const Rows = ({ items, className = '' }: { items: string[]; className?: string }) => (
  <div className={`flex flex-col ${className}`}>
    {items.map((item) => <span key={item} className="flex flex-1 items-center">{item}</span>)}
  </div>
);

const DownButton = () => (
  <button aria-label="Graft" className="flex h-[23px] w-[23px] items-center justify-center rounded-[4px] border-2 border-[#444] bg-[linear-gradient(#f3f3f3,#c3c3c3)]">
    <svg width="17" height="17" viewBox="0 0 17 17" fill="none" stroke="#555" strokeWidth="3"><path d="M8.5 1V14M2.5 9L8.5 14.5L14.5 9" /></svg>
  </button>
);

const Canvas = () => (
  <div className="relative min-h-0 flex-1 overflow-hidden bg-[repeating-linear-gradient(135deg,#d4d0c6_0px,#d4d0c6_2px,#ccc8be_2px,#ccc8be_3px)] text-[17px] text-[#1c1c1c]">
    <Wires />

    {/* HB surface component, runs off the top left */}
    <div className="absolute top-[165px] left-0 h-[48px] w-[130px] bg-[#242424] text-[16px] text-[#ddd]">
      <p className="-ml-[5px] leading-[24px]">.64</p>
      <p className="ml-[2px] leading-[22px]">018</p>
    </div>
    <div className="absolute top-[-40px] -left-2 flex h-[206px] w-[148px] flex-col rounded-[5px] border-2 border-[#2f2f33] bg-[linear-gradient(#b0afbd,#8d8c9a)] pr-1 pl-[20px]">
      <span className="mt-[39px] leading-[28px]">readMe!</span>
      <span className="mt-[68px] flex items-center justify-between leading-[30px]">
        HBSurface
        <button aria-label="Simplify" className="flex h-[23px] w-[23px] items-center justify-center rounded-[4px] border-2 border-[#444] bg-[linear-gradient(#f3f3f3,#c3c3c3)]">
          <svg width="16" height="18" viewBox="0 0 16 18" fill="none" stroke="#666" strokeWidth="3"><path d="M2 1L8 7L14 1M8 7V11" /><path d="M8 11V17" strokeDasharray="1 1" /></svg>
        </button>
      </span>
    </div>
    <div className="absolute top-0 left-0 h-[163px] w-[8px] rounded-br-[5px] border-r-2 border-b-2 border-black bg-[linear-gradient(#5a5a5a,#333)]" />

    {/* addHBGlz */}
    <div className="absolute top-[235px] left-[548px] flex h-[48px] w-[346px] flex-col items-center rounded-[5px] bg-[#022f02] text-[#bfe8b0]">
      <span className="leading-[24px]">VER 0.0.64</span>
      <span className="leading-[22px]">NOV_20_2018</span>
    </div>
    <div className="absolute top-[66px] left-[539px] flex h-[170px] w-[360px] rounded-[5px] border-2 border-[#043004] bg-[linear-gradient(#e0fcc4_0px,#bdf58a_13px,#9cf24a_13px,#82d631_100%)] py-px text-[#133c08]">
      <div className="flex w-[201px] flex-col pl-[3px]">
        {['_HBObj', '_childSurfaces', 'childSurfacesName_', 'EPConstructions_', 'RADMaterials_'].map((item, i) => (
          <div key={item} className="flex flex-1 items-center justify-between pr-[8px]">
            <span>{(i === 1 || i === 2) && <DownButton />}</span>
            <span>{item}</span>
          </div>
        ))}
      </div>
      <NodeLabel className="bg-[linear-gradient(#a7bda4_0px,#678466_9px,#2f5530_9px,#1b3d1a_100%)] text-[#c5f7b0]">addHBGlz</NodeLabel>
      <span className="self-center pl-[5px]">HBObj</span>
    </div>

    {/* Area */}
    <div className={`absolute top-[294px] left-[100px] flex h-[74px] w-[110px] py-px ${nodeGrey}`}>
      <Rows items={['G']} className="w-[31px] pl-[11px]" />
      <NodeLabel className={blackLabel}>Area</NodeLabel>
      <Rows items={['A', 'C']} className="pl-[6px]" />
    </div>

    {/* Scale */}
    <div className={`absolute top-[267px] left-[343px] flex h-[106px] w-[111px] py-px ${nodeGrey}`}>
      <Rows items={['G', 'C', 'F']} className="w-[31px] pl-[11px]" />
      <NodeLabel className={blackLabel}>Scale</NodeLabel>
      <Rows items={['G', 'X']} className="pl-[5px]" />
    </div>

    {/* Factor slider */}
    <div className="absolute top-[393px] -left-2 flex h-[34px] w-[245px] overflow-hidden rounded-[5px] border-2 border-[#2f2f33]">
      <label htmlFor="factor" className="flex w-[48px] items-center justify-end border-r-2 border-[#2f2f33] bg-[linear-gradient(#c4c4cf,#8f8e9c)] pr-[10px]">Factor</label>
      <div className="relative flex flex-1 items-center bg-[linear-gradient(#fafafa,#c9c9c9)] pl-[9px]">
        <svg width="176" height="13" className="absolute top-[6px] left-[9px]" stroke="#aaa" fill="none">
          <path d="M6.5 0V9.500H169.500V0M22.800 3V9M39.100 3V9M55.400 3V9M71.700 3V9M88 3V9M136.900 3V9M153.200 3V9" />
        </svg>
        <input
          id="factor"
          type="range"
          min="0"
          max="1"
          step="0.1"
          defaultValue="0.7"
          className="relative h-[13px] w-[176px] shrink-0 appearance-none bg-transparent [&::-webkit-slider-thumb]:h-[13px] [&::-webkit-slider-thumb]:w-[13px] [&::-webkit-slider-thumb]:appearance-none [&::-webkit-slider-thumb]:rounded-full [&::-webkit-slider-thumb]:border-[4px] [&::-webkit-slider-thumb]:border-black [&::-webkit-slider-thumb]:bg-white"
        />
        <output htmlFor="factor" className="absolute left-[92px] text-[16px]">0.7</output>
      </div>
    </div>

    {/* Tops of the components below the fold */}
    <div className="absolute top-[485px] left-0 h-[40px] w-[7px] border border-black bg-[linear-gradient(#bbb,#666)]" />
    <div className="absolute top-[499px] -left-2 flex h-[60px] w-[194px] rounded-[5px] border-2 border-[#2b3326] bg-[linear-gradient(#e6e6ea,#c4c4cc_14px)] pt-px pl-[19px]">
      <NodeLabel className="bg-[linear-gradient(#a8a8a8,#8a8a8a_12px,#4a4a4a_12px)]" />
    </div>
  </div>
);

const GrasshopperWindow = () => (
  <section className="flex min-w-0 flex-1 flex-col overflow-hidden rounded-t-[6px] border-x border-t-2 border-[#1d2758] bg-[linear-gradient(#b9c8f8_0px,#93a4d6_90px,#8d9cc8_300px,#b9c6f0_500px,#c9d5fb_100%)] px-[6px] shadow-[0_0_6px_rgba(0,0,0,0.6)]">
    <header className="-mx-[6px] flex h-[27px] shrink-0 items-start justify-between bg-[linear-gradient(transparent_14px,rgba(190,205,255,0.7)_100%),linear-gradient(90deg,#aebdf2_0%,#90a2ea_12%,#4757c2_24%,#3f52bd_70%,#5464cc_100%)]">
      <h2 className="mt-[5px] ml-[6px] text-[12px]">Grasshopper - jadid*</h2>
      <div className="mr-[6px] flex h-[18px] overflow-hidden rounded-b-[4px] border border-t-0 border-[#aab6ee] bg-white/20">
        <button aria-label="Minimize" className="flex w-[28px] items-center justify-center border-r border-[#aab6ee]"><svg width="13" height="6"><rect x=".5" y=".5" width="12" height="4" fill="#fff" stroke="#445" /></svg></button>
        <button aria-label="Maximize" className="flex w-[27px] items-center justify-center border-r border-[#aab6ee]"><svg width="13" height="11"><rect x="1.5" y="1.5" width="10" height="8" fill="none" stroke="#445" strokeWidth="3" /><rect x="2" y="2" width="9" height="7" fill="none" stroke="#fff" strokeWidth="2" /></svg></button>
        <button aria-label="Close" className="flex w-[46px] items-center justify-center"><svg width="12" height="11" viewBox="0 0 12 11"><path d="M1 1L11 10M11 1L1 10" stroke="#445" strokeWidth="3.5" /><path d="M2 1.5L10 9.5M10 1.5L2 9.5" stroke="#fff" strokeWidth="2" /></svg></button>
      </div>
    </header>
    <div className="flex min-h-0 flex-1 flex-col border border-b-0 border-[#4c5566] bg-[#ececec]">
      <nav className="flex h-[27px] shrink-0 items-center gap-[20px] bg-[#fafafa] pr-[10px] pl-[12px]">
        {['File', 'Edit', 'View', 'Display', 'Solution', 'Help'].map((m) => <button key={m}>{m}</button>)}
        <span className="ml-auto">jadid</span>
      </nav>
      <div className="flex h-[22px] shrink-0 items-center gap-[16px] overflow-hidden pt-px text-[#6e6e6e]">
        <button className="h-full rounded-t-[6px] border border-b-0 border-[#999] bg-[#fbfbfb] pr-[8px] pb-1 pl-[6px] text-black">Params</button>
        {['Maths', 'Sets', 'Vector', 'Curve', 'Surface', 'Mesh', 'Intersect', 'Transform', 'Display', 'HB', 'PK', 'M+', 'LB', 'Wb', 'Kangaroo2', 'LunchBox'].map((t, i) => (
          <button key={t} className={i === 0 ? '-ml-[8px]' : ''}>{t}</button>
        ))}
      </div>
      <div className="flex h-[88px] shrink-0 gap-[4px] rounded-tr-[6px] border-t border-[#8e8e8e] bg-[linear-gradient(#d4d4d4,#f1f1f1)] pt-[3px] pb-[12px] pl-[2px]">
        <RibbonGroup title="Geometry" blocks={geometry} />
        <RibbonGroup title="Primitive" blocks={primitive} />
        <RibbonGroup title="Input" blocks={input} />
        <RibbonGroup title="Util" blocks={util} />
      </div>
      <CanvasToolbar />
      <div className="flex min-h-0 flex-1 border-r-2 border-l border-[#f4f4f4]"><Canvas /></div>
      <footer className="flex h-[16px] shrink-0 items-start gap-[4px] overflow-hidden border-t-2 border-[#999] bg-[#f0edeb] px-[3px] pt-[4px] leading-[16px]">
        <svg width="15" height="15" viewBox="0 0 15 15" className="shrink-0"><circle cx="7.5" cy="7.5" r="7" fill="#27a0dc" stroke="#0a2d80" /><rect x="6" y="2" width="3" height="6" rx="1" fill="#fff" stroke="#0a2d80" /></svg>
        <span>Autosave complete (24 seconds ago)</span>
        <span className="mr-[28px] ml-auto text-[#777]">1.0.0006</span>
      </footer>
    </div>
  </section>
);

const taskButton = 'flex h-full w-[58px] items-center justify-center';
const taskActive = 'rounded-[3px] border border-[#a5aed8] bg-[linear-gradient(120deg,rgba(255,255,255,0.55),rgba(255,255,255,0.12)_60%,rgba(255,255,255,0.3))]';

const Taskbar = () => (
  <footer className="flex h-[40px] shrink-0 items-stretch overflow-hidden border-t border-[#232b55] bg-[linear-gradient(rgba(150,165,230,0.75)_0px,rgba(90,105,180,0.25)_6px,transparent_12px),linear-gradient(90deg,#2f3a6e_0%,#3b4580_30%,#2c3667_40%,#2f3b72_50%,#4655a8_62%,#2e3a74_76%,#2a3570_88%,#1b2246_100%)] text-white">
    <button aria-label="Start" className="flex w-[54px] items-center justify-center">
      <svg width="38" height="38" viewBox="0 0 38 38">
        <defs><radialGradient id="orb" cx=".5" cy=".9" r=".9"><stop offset="0" stopColor="#4ee1ff" /><stop offset=".45" stopColor="#1c6fae" /><stop offset="1" stopColor="#8fb2cc" /></radialGradient></defs>
        <circle cx="19" cy="19" r="17.5" fill="url(#orb)" stroke="#16334f" />
        <path d="M11 11Q15 8 19 10L17 18Q13 16 9 18Z" fill="#f2652a" />
        <path d="M20 10.5Q24 13 29 11L27 19Q22 20 18 18Z" fill="#8cc63e" />
        <path d="M8.5 19.5Q12 17 16.5 19.5L15 27Q11 25 7 27Z" fill="#4fb2ea" />
        <path d="M18 20Q22 22 26.5 20.5L24 28Q20 29 16 27Z" fill="#fdc82f" />
      </svg>
    </button>
    <button aria-label="Explorer" className={`ml-[6px] ${taskButton} ${taskActive}`}>
      <svg width="34" height="32" viewBox="0 0 34 32">
        <path d="M2 4H13L15 7H32V28H2Z" fill="#f1d98a" stroke="#b8954a" />
        <path d="M5 7H30V26H5Z" fill="#faecb4" />
        <path d="M4 3h5v3H4z" fill="#3aa24a" /><path d="M13 5h5v3h-5z" fill="#d8402a" /><path d="M23 7h5v3h-5z" fill="#2f83d8" />
        <path d="M5 31V21Q5 19 7 19H27Q29 19 29 21V31H24V24H10V31Z" fill="#9bd3ee" stroke="#4f9bc4" />
      </svg>
    </button>
    <button aria-label="Internet Explorer" className={`ml-[3px] ${taskButton}`}>
      <svg width="32" height="32" viewBox="0 0 32 32" fill="none">
        <path d="M26 22A10 10 0 1 1 27 16H9" stroke="#3fb8f3" strokeWidth="6" />
        <path d="M3 29Q-2 22 11 10Q24 -1 29 3Q32 6 28 12" stroke="#f6c623" strokeWidth="2.5" />
        <path d="M3 29Q6 31 11 27" stroke="#f6c623" strokeWidth="2.5" />
      </svg>
    </button>
    <button aria-label="Media Player" className={`ml-[3px] ${taskButton}`}>
      <svg width="28" height="28" viewBox="0 0 28 28">
        <path d="M9 3H27V23H9Z" fill="#5da6cf" stroke="#cfe8f6" /><path d="M5 3H23V25H5Z" fill="#7dbbdd" stroke="#cfe8f6" /><path d="M1 3H20V27H1Z" fill="#a5d3eb" stroke="#d8eef9" />
        <circle cx="11" cy="15" r="8" fill="#f36f21" stroke="#fff" strokeOpacity=".5" /><path d="M8 10L16 15L8 20Z" fill="#fff" />
      </svg>
    </button>
    <button aria-label="Firefox" className={`ml-[5px] ${taskButton}`}>
      <svg width="32" height="32" viewBox="0 0 32 32">
        <circle cx="16" cy="17" r="14" fill="#ff5a1f" />
        <path d="M17 5Q27 4 29 14Q32 22 24 28Q28 20 24 14Z" fill="#ffc928" />
        <path d="M21 1Q31 8 30 18Q26 10 21 9Z" fill="#ffdc3a" />
        <circle cx="18" cy="14" r="8" fill="#2a54b8" />
        <path d="M2 8Q3 5 5 4Q6 8 11 9Q16 8 17 11Q16 14 13 15Q14 19 19 19Q23 18 26 19Q21 27 12 24Q3 20 2 8Z" fill="#ff8a1e" />
        <path d="M1.5 14Q2 28 14 31Q4 24 6 14Z" fill="#e3223c" />
      </svg>
    </button>
    <button aria-label="Rhino" className={`ml-[3px] ${taskButton} ${taskActive}`}>
      <Rhino6 size={32} />
    </button>
    <div className="ml-auto flex items-center">
      <span className="mb-[6px]">EN</span>
      <svg width="9" height="5" viewBox="0 0 9 5" className="ml-[16px]"><path d="M0 5L4.5 0L9 5Z" fill="#fff" /></svg>
      <svg width="16" height="16" viewBox="0 0 16 16" className="ml-[12px]"><path d="M1.5 1V15" stroke="#fff" strokeWidth="1.5" /><path d="M2 2H8V4H15L12 9H7V7H2Z" fill="#fff" /></svg>
      <svg width="16" height="16" viewBox="0 0 16 16" className="ml-[8px]" fill="none" stroke="#fff" strokeWidth="1.5"><path d="M9 3H2V15H9" /><path d="M4 1.5H7" /><path d="M7 5H13V8L10 11L7 8ZM10 11V15M8.5 2V5M12 2V5" fill="#fff" /></svg>
      <svg width="18" height="16" viewBox="0 0 18 16" className="ml-[8px]"><path d="M1 13h2v2H1zM5 11h2v4H5zM9 8h2v7H9zM12 5h2v10h-2zM15 2h2v13h-2z" fill="#7a7f9a" /><path d="M7 6L15 15M15 6L7 15" stroke="#e01010" strokeWidth="2" /></svg>
      <svg width="16" height="16" viewBox="0 0 16 16" className="ml-[6px]"><path d="M1 5H4L8 1V15L4 11H1Z" fill="#fff" /><path d="M10 5Q12 8 10 11M12 3Q15.5 8 12 13" fill="none" stroke="#fff" /></svg>
      <div className="w-[79px] pl-1 text-center leading-[17px]">
        <p>8:27 AM</p>
        <p>8/7/2019</p>
      </div>
      <button aria-label="Show desktop" className="h-full w-[14px] border border-[#6b769f] bg-white/10" />
    </div>
  </footer>
);

export default function App() {
  return (
    <div className="flex h-screen flex-col overflow-hidden bg-[#1d2758] font-['Open_Sans','Noto_Sans',sans-serif] text-[11px] leading-[15px] text-black">
      <main className="flex min-h-0 flex-1">
        <RhinoWindow />
        <GrasshopperWindow />
      </main>
      <Taskbar />
    </div>
  );
}
